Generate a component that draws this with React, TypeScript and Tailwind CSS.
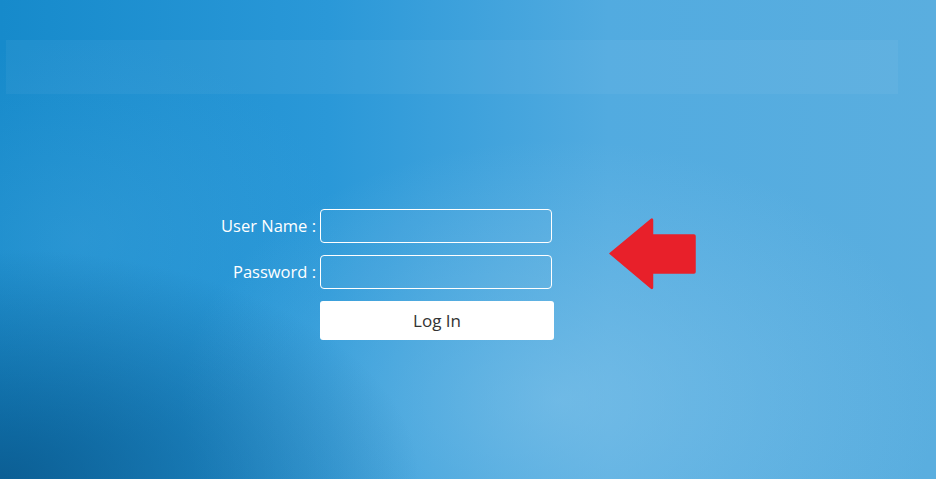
import React from "react";

export default function App() {
  return (
    <div className="relative h-[479px] w-full overflow-hidden bg-[radial-gradient(ellipse_420px_230px_at_0px_479px,rgba(8,80,130,0.75),rgba(8,80,130,0)),radial-gradient(ellipse_380px_260px_at_560px_400px,rgba(140,200,235,0.55),rgba(140,200,235,0)),radial-gradient(ellipse_260px_200px_at_80px_240px,rgba(70,165,220,0.35),rgba(70,165,220,0)),linear-gradient(90deg,#168acb_0%,#2a98d8_35%,#52abe0_65%,#5aaedf_100%)] font-['Open_Sans',sans-serif]">
      <div className="ml-[6px] mt-[40px] h-[54px] w-[892px] bg-white/[0.045]" />
      <div className="ml-[200px] mt-[115px] flex items-start">
        <div className="grid grid-cols-[120px_234px] gap-y-[12px]">
          <label className="flex h-[34px] items-center justify-end pr-[4px] text-[16.5px] text-white">
            User Name :
          </label>
          <input className="h-[34px] w-[232px] rounded-[4px] border border-white bg-white/[0.03] outline-none" />
          <label className="flex h-[34px] items-center justify-end pr-[4px] text-[16.5px] text-white">
            Password :
          </label>
          <input type="password" className="h-[34px] w-[232px] rounded-[4px] border border-white bg-white/[0.03] outline-none" />
          <div />
          <button className="h-[39px] w-[234px] rounded-[3px] bg-white text-[17px] text-[#333]">
            Log In
          </button>
        </div>
        <svg className="ml-[55px] mt-[9px]" width="87" height="72" viewBox="0 0 87 72">
          <path
            d="M1 35.5 L42 1.5 Q43.5 0.5 43.5 2 L43.5 17 L85 17 Q86 17 86 18 L86 54 Q86 55 85 55 L43.5 55 L43.5 69.5 Q43.5 71 42 70 Z"
            fill="#e8202a"
            stroke="#e8202a"
            strokeLinejoin="round"
            strokeWidth="1.5"
          />
        </svg>
      </div>
    </div>
  );
}
